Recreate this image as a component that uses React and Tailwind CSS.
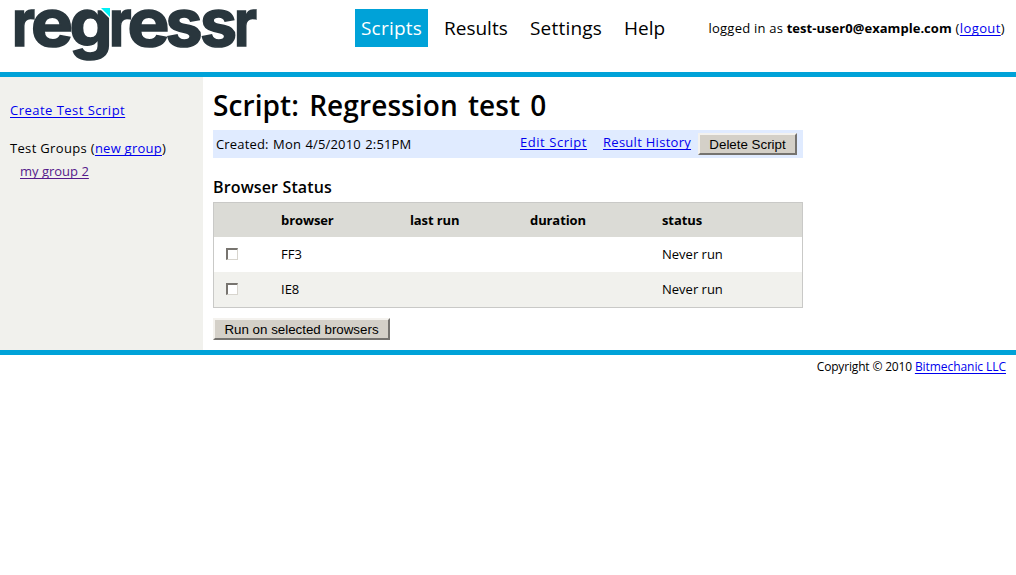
import React from "react";

const link = "text-[#0000ee] underline underline-offset-2 decoration-1 [text-decoration-skip-ink:none]";
const button =
  "shrink-0 bg-[#d4d0c8] font-['Liberation_Sans',sans-serif] text-[13.33px] leading-[18px] text-black whitespace-nowrap border-t-2 border-l-2 border-b-2 border-r-2 border-t-[#f4f2ee] border-l-[#f4f2ee] border-b-[#75736f] border-r-[#75736f]";

const letters = [
  { ch: "r", x: 12, w: 23 },
  { ch: "e", x: 31, w: 42 },
  { ch: "g", x: 69.5, w: 43 },
  { ch: "r", x: 109, w: 22.5 },
  { ch: "e", x: 127.5, w: 42 },
  { ch: "s", x: 165.5, w: 37 },
  { ch: "s", x: 200, w: 37 },
  { ch: "r", x: 234, w: 23 },
];

function Logo() {
  return (
    <svg width="262" height="72" className="block shrink-0" role="img" aria-label="regressr">
      <g className="font-['Inter',sans-serif] font-bold" fontSize="65" fill="#29363d" stroke="#29363d" strokeWidth="1.6">
        {letters.map((l) => (
          <text key={l.x} x={l.x} y="45.5" textLength={l.w} lengthAdjust="spacingAndGlyphs">{l.ch}</text>
        ))}
      </g>
      <polygon points="97,6 110.5,6 110.5,19.5" fill="#ffffff" />
      <polygon points="101,8 110,8 110,17" fill="#00f0f5" />
    </svg>
  );
}

function Check() {
  return (
    <input
      type="checkbox"
      className="block h-3 w-3 appearance-none border border-t-2 border-l-2 border-t-[#77746f] border-l-[#77746f] border-r-[#d8d5ce] border-b-[#d8d5ce] bg-white"
    />
  );
}

const rows = [
  { name: "FF3", status: "Never run", bg: "bg-white" },
  { name: "IE8", status: "Never run", bg: "bg-[#f1f1ed]" },
];
const cols = "grid grid-cols-[67px_129px_120px_132px_1fr] items-center";

export default function App() {
  return (
    <div className="min-h-[575px] bg-white font-['Open_Sans',sans-serif] text-[13px] leading-[18px] text-black">
      <header className="flex h-[77px] items-start border-b-[5px] border-[#00a2d8]">
        <Logo />
        <nav className="ml-[93px] mt-[9px] flex text-[19px] leading-[38px] whitespace-nowrap">
          <a className="mr-[11px] h-[38px] w-[73px] bg-[#00a2d8] pl-[6px] tracking-[0.2px] text-white">Scripts</a>
          <a className="mr-[10px] w-[75px] pl-[5px]">Results</a>
          <a className="mr-[10px] w-[84px] pl-[6px] tracking-[0.2px]">Settings</a>
          <a className="w-[53px] pl-[6px]">Help</a>
        </nav>
        <div className="ml-auto mr-[11px] mt-[19px] whitespace-pre">
          <span className="tracking-[0.22px]">logged in as </span>
          <b className="tracking-[0.04px]">test-user0@example.com</b>
          <span className="tracking-[0.4px]"> (<a className={link}>logout</a>)</span>
        </div>
      </header>

      <div className="flex h-[278px] border-b-[5px] border-[#00a2d8]">
        <aside className="w-[203px] shrink-0 bg-[#f1f1ed] pl-[10px] pt-[24px] whitespace-nowrap">
          <div><a className={`${link} tracking-[0.48px]`}>Create Test Script</a></div>
          <div className="mt-5"><span className="tracking-[0.33px]">Test Groups (</span><a className={`${link} tracking-[0.25px]`}>new group</a>)</div>
          <div className="mt-[5px] pl-[10px]"><a className="text-[#551a8b] underline decoration-1 underline-offset-2 [text-decoration-skip-ink:none]">my group 2</a></div>
        </aside>

        <main className="ml-[10px] w-[590px]">
          <h1 className="pt-[8px] text-[28px] font-semibold leading-[40px] tracking-[0.1px] [word-spacing:2.7px] whitespace-nowrap">Script: Regression test 0</h1>
          <div className="mt-[5px] flex h-[28px] items-start bg-[#e0ebff] pl-[3px] whitespace-nowrap">
            <span className="w-[304px] pt-[5px] tracking-[0.17px] [word-spacing:0.8px]">Created: Mon 4/5/2010 2:51PM</span>
            <a className={`${link} mt-[3px] w-[67px] tracking-[0.55px]`}>Edit Script</a>
            <a className={`${link} ml-4 mt-[3px] w-[88px] tracking-[0.28px]`}>Result History</a>
            <button className={`${button} ml-[7px] mt-[3px] h-[22px] w-[99px] pt-px`}>Delete Script</button>
          </div>
          <h2 className="mt-[18px] text-[16px] font-semibold leading-[22px] tracking-[0.14px]">Browser Status</h2>
          <div className="mt-[4px] h-[106px] border border-[#c9c9c7]">
            <div className={`${cols} h-[34px] bg-[#dbdbd6] font-bold tracking-[-0.1px]`}>
              <span />
              <span>browser</span>
              <span>last run</span>
              <span>duration</span>
              <span>status</span>
            </div>
            {rows.map((r) => (
              <div key={r.name} className={`${cols} ${r.bg} h-[35px] pb-px`}>
                <span className="pl-3"><Check /></span>
                <span>{r.name}</span>
                <span />
                <span />
                <span>{r.status}</span>
              </div>
            ))}
          </div>
          <button className={`${button} mt-[10px] block h-[22px] w-[177px] pt-px`}>Run on selected browsers</button>
        </main>
      </div>

      <footer className="pr-[10px] pt-[3px] text-right text-[12px] whitespace-pre">
        <span className="tracking-[-0.17px]">Copyright © 2010 </span>
        <a className={`${link} tracking-[-0.06px]`}>Bitmechanic LLC</a>
      </footer>
    </div>
  );
}
